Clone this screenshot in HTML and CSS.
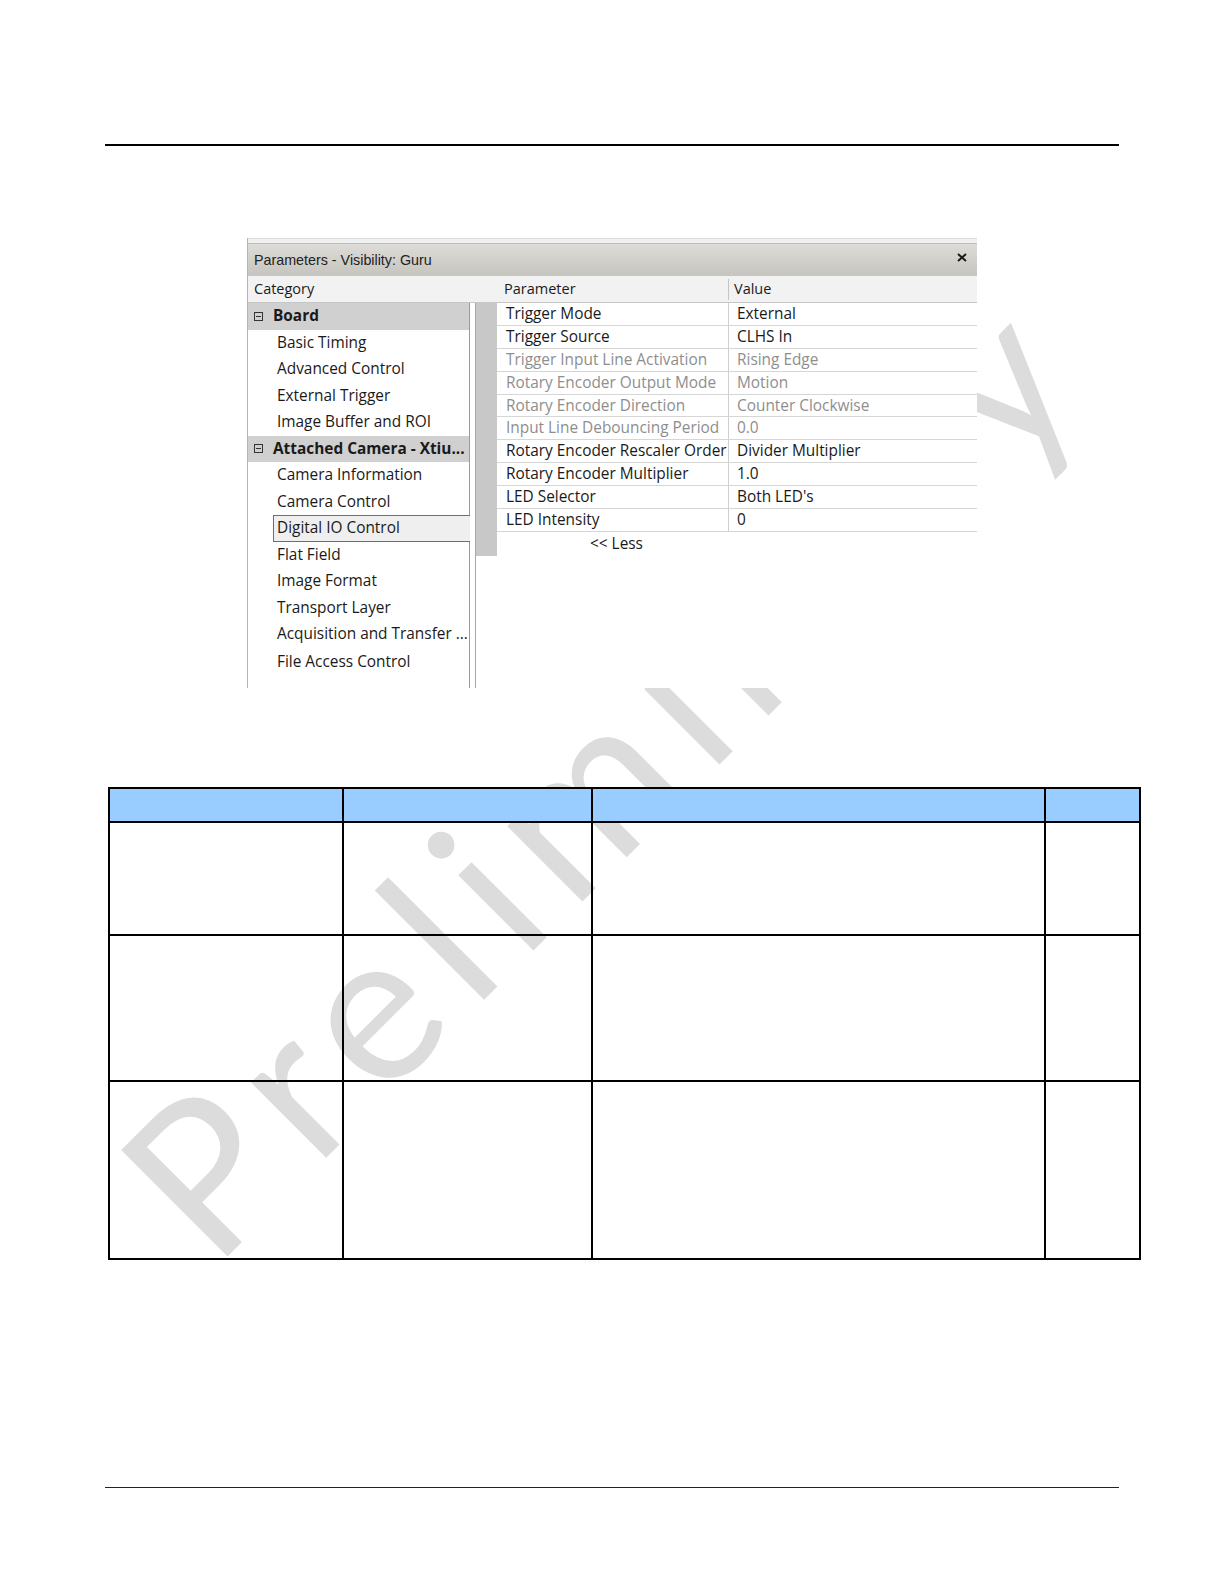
FILE: index.html
```html
<!DOCTYPE html>
<html lang="en">
<head>
<meta charset="utf-8">
<title>Parameters - Visibility: Guru</title>
<link rel="stylesheet" href="styles.css">
</head>
<body>
<div class="page">
  <svg class="watermark" width="1224" height="1584" viewBox="0 0 1224 1584" aria-hidden="true">
    <text x="214" y="1270" transform="rotate(-45 214 1270)" textLength="1235" lengthAdjust="spacing">Preliminary</text>
  </svg>
  <div class="content">
    <div class="rule-top"></div>

    <div class="shot">
      <div class="shot-cap"></div>
      <div class="titlebar">
        <span class="title">Parameters - Visibility: Guru</span>
        <svg class="close" width="10" height="9" viewBox="0 0 10 9"><path d="M1 1 L9 8 M9 1 L1 8" stroke="#1a1a1a" stroke-width="2" fill="none"/></svg>
      </div>
      <div class="headrow">
        <div class="h-cat">Category</div>
        <div class="h-split"></div>
        <div class="h-grid">
          <div class="h-gutter"></div>
          <div class="h-param">Parameter</div>
          <div class="h-sep"></div>
          <div class="h-value">Value</div>
        </div>
      </div>
      <div class="body">
        <div class="cat">
          <div class="cat-row cat-group"><svg class="minus" width="9" height="9" viewBox="0 0 9 9"><rect x="0.5" y="0.5" width="8" height="8" fill="none" stroke="#333" stroke-width="1"/><path d="M2 4.5 H7" stroke="#333" stroke-width="1"/></svg><span>Board</span></div>
          <div class="cat-row">Basic Timing</div>
          <div class="cat-row">Advanced Control</div>
          <div class="cat-row">External Trigger</div>
          <div class="cat-row">Image Buffer and ROI</div>
          <div class="cat-row cat-group"><svg class="minus" width="9" height="9" viewBox="0 0 9 9"><rect x="0.5" y="0.5" width="8" height="8" fill="none" stroke="#333" stroke-width="1"/><path d="M2 4.5 H7" stroke="#333" stroke-width="1"/></svg><span>Attached Camera - Xtiu...</span></div>
          <div class="cat-row">Camera Information</div>
          <div class="cat-row">Camera Control</div>
          <div class="cat-row sel">Digital IO Control</div>
          <div class="cat-row">Flat Field</div>
          <div class="cat-row">Image Format</div>
          <div class="cat-row">Transport Layer</div>
          <div class="cat-row">Acquisition and Transfer ...</div>
          <div class="cat-row last">File Access Control</div>
        </div>
        <div class="split"></div>
        <div class="grid">
          <div class="gutter"></div>
          <div class="cells">
            <div class="g-row"><div class="g-p">Trigger Mode</div><div class="g-v">External</div></div>
            <div class="g-row"><div class="g-p">Trigger Source</div><div class="g-v">CLHS In</div></div>
            <div class="g-row dis"><div class="g-p">Trigger Input Line Activation</div><div class="g-v">Rising Edge</div></div>
            <div class="g-row dis"><div class="g-p">Rotary Encoder Output Mode</div><div class="g-v">Motion</div></div>
            <div class="g-row dis"><div class="g-p">Rotary Encoder Direction</div><div class="g-v">Counter Clockwise</div></div>
            <div class="g-row dis"><div class="g-p">Input Line Debouncing Period</div><div class="g-v">0.0</div></div>
            <div class="g-row"><div class="g-p">Rotary Encoder Rescaler Order</div><div class="g-v">Divider Multiplier</div></div>
            <div class="g-row"><div class="g-p">Rotary Encoder Multiplier</div><div class="g-v">1.0</div></div>
            <div class="g-row"><div class="g-p">LED Selector</div><div class="g-v">Both LED's</div></div>
            <div class="g-row"><div class="g-p">LED Intensity</div><div class="g-v">0</div></div>
            <div class="less">&lt;&lt; Less</div>
          </div>
        </div>
      </div>
    </div>

    <table class="spec">
      <colgroup><col class="c1"><col class="c2"><col class="c3"><col class="c4"></colgroup>
      <tr class="r-head"><th></th><th></th><th></th><th></th></tr>
      <tr class="r1"><td></td><td></td><td></td><td></td></tr>
      <tr class="r2"><td></td><td></td><td></td><td></td></tr>
      <tr class="r3"><td></td><td></td><td></td><td></td></tr>
    </table>

    <div class="rule-bottom"></div>
  </div>
</div>
</body>
</html>
```

FILE: styles.css
```css
* { box-sizing: border-box; }
html, body { margin: 0; padding: 0; background: #fff; }

.page { position: relative; width: 1224px; height: 1584px; overflow: hidden; }

.watermark { position: absolute; left: 0; top: 0; z-index: 0; }
.watermark text { font-family: Lato, "Open Sans", sans-serif; font-size: 210px; fill: #dcdcdc; }

.content { position: relative; z-index: 1; padding-top: 144px; }

.rule-top { margin-left: 105px; width: 1014px; height: 2px; background: #000; }

/* ---------- screenshot ---------- */
.shot {
  margin: 92px 0 0 247px;
  width: 730px;
  height: 450px;
  background: #fff;
  border-left: 1px solid #b4b4b4;
  display: flex;
  flex-direction: column;
  overflow: hidden;
  font-family: "Open Sans", sans-serif;
  color: #1a1a1a;
}
.shot-cap { height: 5px; flex: none; background: #f1f1f1; border-top: 1px solid #dcdcdc; }
.titlebar {
  height: 33px; flex: none;
  border-top: 1px solid #bdbdbd;
  background: linear-gradient(#dedcd8, #c6c4be);
  display: flex; align-items: center; justify-content: space-between;
  padding: 0 10px 0 6px;
}
.title { font-family: "Liberation Sans", Arial, sans-serif; font-size: 14.3px; color: #222; }
.close { align-self: flex-start; margin-top: 9px; }

.headrow {
  height: 27px; flex: none;
  display: flex;
  background: #f2f2f2;
  border-bottom: 1px solid #c6c6c6;
  font-size: 14.5px;
  line-height: 26px;
}
.h-cat { width: 222px; padding-left: 6px; }
.h-split { width: 5px; }
.h-grid { flex: 1; display: flex; }
.h-gutter { width: 22px; }
.h-param { width: 231px; padding-left: 7px; }
.h-sep { width: 1px; margin: 3px 0 2px; background: #c4c4c4; }
.h-value { flex: 1; padding-left: 5px; }

.body { flex: 1; display: flex; }

.cat { width: 222px; border-right: 1px solid #9a9a9a; font-size: 15.4px; }
.cat-row { height: 26.5px; line-height: 26.5px; padding-left: 29px; white-space: nowrap; overflow: hidden; }
.cat-group { background: #d0d0d0; font-weight: 700; padding-left: 6px; display: flex; align-items: center; }
.cat-group .minus { margin-right: 10px; flex: none; }
.cat-row.sel {
  position: relative;
  margin-left: 25px; margin-right: -1px;
  padding-left: 3px;
  border: 1px solid #6e6e6e; border-right: none;
  background: #efefef;
  line-height: 24.5px;
}
.cat-row.last { margin-top: 1.5px; }

.split { width: 5px; }

.grid { flex: 1; display: flex; align-items: flex-start; border-left: 1px solid #a8a8a8; align-self: stretch; }
.gutter { width: 21px; height: 253px; background: #c8c8c8; }
.cells { flex: 1; font-size: 15.4px; }
.g-row { display: flex; height: 22.9px; line-height: 21.9px; border-bottom: 1px solid #d6d6d6; white-space: nowrap; }
.g-p { width: 232px; padding-left: 9px; border-right: 1px solid #cfcfcf; overflow: hidden; }
.g-v { flex: 1; padding-left: 8px; }
.g-row.dis { color: #8e8e8e; }
.less { height: 24px; line-height: 24px; padding-left: 93px; }

/* ---------- table ---------- */
.spec { margin: 99px 0 0 108px; width: 1031px; border-collapse: collapse; table-layout: fixed; }
.spec th, .spec td { border: 2px solid #000; padding: 0; }
.spec th { background: #99ccff; }
.c1 { width: 234px; }
.c2 { width: 249px; }
.c3 { width: 453px; }
.c4 { width: 95px; }
.r-head { height: 34px; }
.r1 { height: 113px; }
.r2 { height: 146px; }
.r3 { height: 178px; }

.rule-bottom { margin: 227px 0 0 105px; width: 1014px; height: 1px; background: #222; }
```
